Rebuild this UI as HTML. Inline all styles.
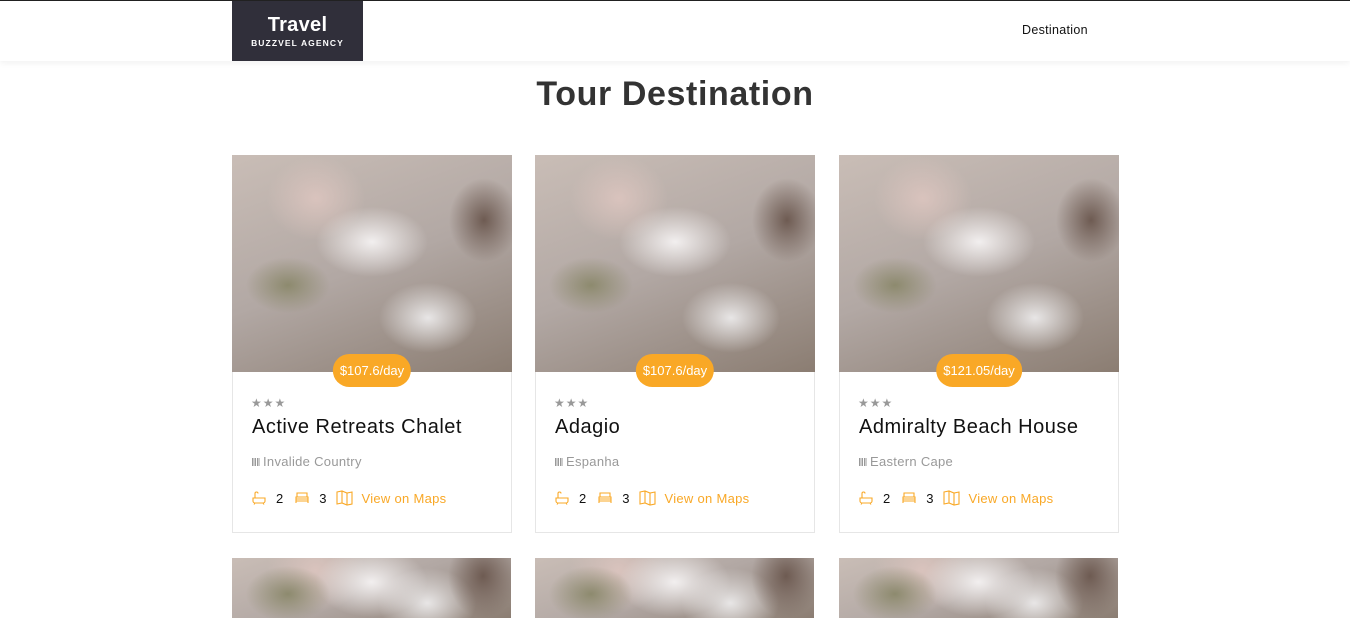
<!DOCTYPE html>
<html><head><meta charset="utf-8"><style>
*{box-sizing:border-box;margin:0;padding:0}
body{width:1350px;height:597px;overflow:hidden;background:#fff;font-family:"Liberation Sans",sans-serif;border-top:1px solid #222}
.nav{height:60px;box-shadow:0 2px 6px rgba(0,0,0,.06);position:relative}
.logo{position:absolute;left:232px;top:0;width:131px;height:60px;background:#302f3a;color:#fff;text-align:center}
.logo b{display:block;font-size:20px;padding-top:13px;line-height:22px;letter-spacing:.3px}
.logo small{display:block;font-size:8.5px;font-weight:bold;letter-spacing:1.1px;margin-top:2px}
.nav .link{position:absolute;left:1022px;top:22px;font-size:12.5px;color:#111;letter-spacing:.3px}
h1{position:absolute;top:75px;left:0;width:1350px;text-align:center;font-size:34px;color:#333;font-weight:bold;letter-spacing:.6px}
.card{position:absolute;top:155px;width:280px;height:378px;border:1px solid #e6e6e6;border-top:none}
.img{height:217px;background:
radial-gradient(ellipse 60px 40px at 20% 60%,#8d8a6e 0,transparent 70%),
radial-gradient(ellipse 50px 60px at 90% 30%,#6e5b52 0,transparent 70%),
radial-gradient(ellipse 80px 50px at 50% 40%,#f2efef 0,transparent 70%),
radial-gradient(ellipse 70px 60px at 30% 20%,#d9c3bd 0,transparent 70%),
radial-gradient(ellipse 70px 50px at 70% 75%,#e8e6e6 0,transparent 70%),
linear-gradient(160deg,#c9bdb6,#b2a8a4 50%,#8b7d72);margin:0 -1px}
.price{position:absolute;top:199px;left:50%;transform:translateX(-50%);background:#f9a826;color:#fff;font-size:13px;padding:9px 7px;border-radius:20px;white-space:nowrap}
.stars{position:absolute;top:241px;left:18px;color:#999;font-size:12px;letter-spacing:1px}
.title{position:absolute;top:261px;left:19px;font-size:20px;color:#111;letter-spacing:.5px}
.loc{position:absolute;top:299px;left:19px;font-size:13px;color:#999;letter-spacing:.3px}
.loc i{display:inline-block;width:8px;height:8px;background:repeating-linear-gradient(90deg,#999 0 1.5px,transparent 1.5px 2.5px);margin-right:3px}
.feat{position:absolute;top:335px;left:19px;font-size:13px;color:#111;display:flex;align-items:center}
.feat svg{stroke:#f9a826;fill:none;stroke-width:1.1}
.o{color:#f9a826;letter-spacing:.3px}
.row2{position:absolute;top:558px;width:279px;height:60px}
</style></head><body>
<div class="nav"><div class="logo"><b>Travel</b><small>BUZZVEL AGENCY</small></div><div class="link">Destination</div></div>
<h1>Tour Destination</h1>

<div class="card" style="left:232px"><div class="img"></div><div class="price">$107.6/day</div><div class="stars">★★★</div><div class="title">Active Retreats Chalet</div><div class="loc"><i></i>Invalide Country</div><div class="feat">
<svg width="14" height="14" viewBox="0 0 14 14"><path d="M1 7h12v3a2 2 0 0 1-2 2H3a2 2 0 0 1-2-2z M3 12l-1 1.5 M11 12l1 1.5 M3 7V2.5a1.5 1.5 0 0 1 3 0"/></svg><span style="margin:0 12px 0 10px">2</span>
<svg width="14" height="12" viewBox="0 0 14 12"><path d="M2 1h10v4H2z M1 5h12v4H1z M1 9v2 M13 9v2 M1 7h12"/></svg><span style="margin:0 10px 0 10px">3</span>
<svg width="17" height="16" viewBox="0 0 17 16"><path d="M1 2l5-1 5 2 5-1v12l-5 1-5-2-5 1z M6 1v12 M11 3v12"/></svg><span class="o" style="margin-left:8px">View on Maps</span></div></div>
<div class="card" style="left:535px"><div class="img"></div><div class="price">$107.6/day</div><div class="stars">★★★</div><div class="title">Adagio</div><div class="loc"><i></i>Espanha</div><div class="feat">
<svg width="14" height="14" viewBox="0 0 14 14"><path d="M1 7h12v3a2 2 0 0 1-2 2H3a2 2 0 0 1-2-2z M3 12l-1 1.5 M11 12l1 1.5 M3 7V2.5a1.5 1.5 0 0 1 3 0"/></svg><span style="margin:0 12px 0 10px">2</span>
<svg width="14" height="12" viewBox="0 0 14 12"><path d="M2 1h10v4H2z M1 5h12v4H1z M1 9v2 M13 9v2 M1 7h12"/></svg><span style="margin:0 10px 0 10px">3</span>
<svg width="17" height="16" viewBox="0 0 17 16"><path d="M1 2l5-1 5 2 5-1v12l-5 1-5-2-5 1z M6 1v12 M11 3v12"/></svg><span class="o" style="margin-left:8px">View on Maps</span></div></div>
<div class="card" style="left:839px"><div class="img"></div><div class="price">$121.05/day</div><div class="stars">★★★</div><div class="title">Admiralty Beach House</div><div class="loc"><i></i>Eastern Cape</div><div class="feat">
<svg width="14" height="14" viewBox="0 0 14 14"><path d="M1 7h12v3a2 2 0 0 1-2 2H3a2 2 0 0 1-2-2z M3 12l-1 1.5 M11 12l1 1.5 M3 7V2.5a1.5 1.5 0 0 1 3 0"/></svg><span style="margin:0 12px 0 10px">2</span>
<svg width="14" height="12" viewBox="0 0 14 12"><path d="M2 1h10v4H2z M1 5h12v4H1z M1 9v2 M13 9v2 M1 7h12"/></svg><span style="margin:0 10px 0 10px">3</span>
<svg width="17" height="16" viewBox="0 0 17 16"><path d="M1 2l5-1 5 2 5-1v12l-5 1-5-2-5 1z M6 1v12 M11 3v12"/></svg><span class="o" style="margin-left:8px">View on Maps</span></div></div>

<div class="row2 img" style="left:232px;margin:0"></div>
<div class="row2 img" style="left:535px;margin:0"></div>
<div class="row2 img" style="left:839px;margin:0"></div>
</body></html>
